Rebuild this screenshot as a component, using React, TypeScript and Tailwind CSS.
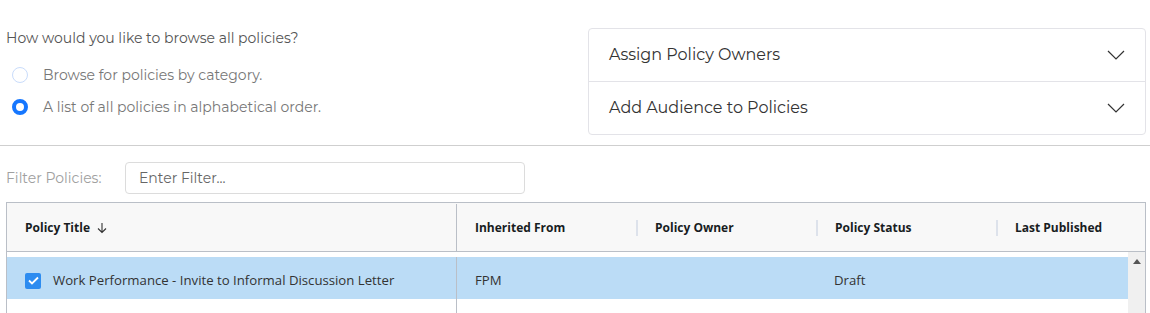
import React from "react";

const sans = "font-['Montserrat','DejaVu_Sans',sans-serif]";
const grid = "font-['Segoe_UI','Open_Sans',sans-serif]";

const Chevron = () => (
  <svg width="18" height="10" viewBox="0 0 18 10" fill="none" className="text-[#333]">
    <path d="M1 1l8 8 8-8" stroke="currentColor" strokeWidth="1.2" />
  </svg>
);

const columns = [
  { name: "Inherited From", width: "w-[179px]" },
  { name: "Policy Owner", width: "w-[180px]" },
  { name: "Policy Status", width: "w-[180px]" },
  { name: "Last Published", width: "flex-1" },
];

const App: React.FC = () => {
  const [mode, setMode] = React.useState("list");

  return (
    <div className="w-[1150px] h-[313px] bg-white overflow-hidden">
      <div className="flex justify-between pt-[28px] pr-[4px]">
        <div className={`pl-[6px] ${sans} text-[14px] leading-[20px]`}>
          <div className="text-[#555]">How would you like to browse all policies?</div>
          <div className="mt-[17px] flex flex-col gap-[12px]">
            {[
              { id: "category", label: "Browse for policies by category." },
              { id: "list", label: "A list of all policies in alphabetical order." },
            ].map((o) => (
              <label key={o.id} className="flex items-center pl-[6px] text-[#777] cursor-pointer" onClick={() => setMode(o.id)}>
                {mode === o.id ? (
                  <span className="w-[16px] h-[16px] rounded-full border-[4px] border-[#1677ff] bg-white" />
                ) : (
                  <span className="w-[16px] h-[16px] rounded-full border border-[#c9dcfb] bg-white" />
                )}
                <span className="ml-[15px]">{o.label}</span>
              </label>
            ))}
          </div>
        </div>
        <div className={`w-[558px] border border-[#e3e3e8] rounded-[4px] ${sans} text-[16px] text-[#333]`}>
          <div className="h-[53px] flex items-center justify-between pl-[20px] pr-[20px] border-b border-[#e3e3e8]">
            <span>Assign Policy Owners</span>
            <Chevron />
          </div>
          <div className="h-[52px] flex items-center justify-between pl-[20px] pr-[20px]">
            <span>Add Audience to Policies</span>
            <Chevron />
          </div>
        </div>
      </div>

      <div className="mt-[10px] border-t border-[#cfcfcf]" />

      <div className={`flex items-center mt-[16px] pl-[6px] ${sans} text-[14px]`}>
        <span className="w-[119px] text-[#a0a0a0]">Filter Policies:</span>
        <input
          className="w-[400px] h-[32px] border border-[#dcdcdc] rounded-[4px] px-[13px] text-[#666] placeholder:text-[#666] outline-none"
          placeholder="Enter Filter..."
        />
      </div>

      <div className={`ml-[6px] mr-[4px] mt-[8px] border border-[#babfc7] h-[120px] ${grid}`}>
        <div className="flex h-[49px] bg-[#f8f8f8] border-b border-[#babfc7] font-bold text-[12px] text-[#181d1f] pt-[1px]">
          <div className="w-[450px] flex items-center pl-[18px] border-r border-[#babfc7]">
            Policy Title
            <svg width="12" height="12" viewBox="0 0 12 12" className="ml-[6px]" fill="none">
              <path d="M6 1v9M2 6.5l4 4 4-4" stroke="#333" strokeWidth="1.1" />
            </svg>
          </div>
          {columns.map((c, i) => (
            <div key={c.name} className={`${c.width} flex items-center`}>
              {i > 0 && <span className="w-[2px] h-[16px] bg-[#dde2eb] mr-[17px]" />}
              <span className={i === 0 ? "pl-[18px]" : ""}>{c.name}</span>
            </div>
          ))}
        </div>
        <div className="flex h-[70px] text-[13.2px]">
          <div className="flex-1 pt-[5px]">
            <div className="flex h-[42px] bg-[#bbdcf6] text-[#333]">
              <div className="w-[450px] flex items-center pl-[18px] pt-[5px] border-r border-[#babfc7]">
                <span className="w-[16px] h-[16px] rounded-[2px] bg-[#2d8cf0] flex items-center justify-center">
                  <svg width="11" height="9" viewBox="0 0 11 9" fill="none">
                    <path d="M1 4.5l3 3 6-6" stroke="white" strokeWidth="1.8" />
                  </svg>
                </span>
                <span className="ml-[12px]">Work Performance - Invite to Informal Discussion Letter</span>
              </div>
              <div className="w-[179px] flex items-center pl-[18px] pt-[5px]">FPM</div>
              <div className="w-[180px]" />
              <div className="w-[180px] flex items-center pl-[18px] pt-[5px]">Draft</div>
              <div className="flex-1" />
            </div>
            <div className="w-[450px] h-[20px] border-r border-[#babfc7]" />
          </div>
          <div className="w-[17px] bg-[#f0f0f0] flex justify-center pt-[7px]">
            <svg width="8" height="5" viewBox="0 0 8 5">
              <path d="M0 5L4 0l4 5z" fill="#555" />
            </svg>
          </div>
        </div>
      </div>
    </div>
  );
};

export default App;
